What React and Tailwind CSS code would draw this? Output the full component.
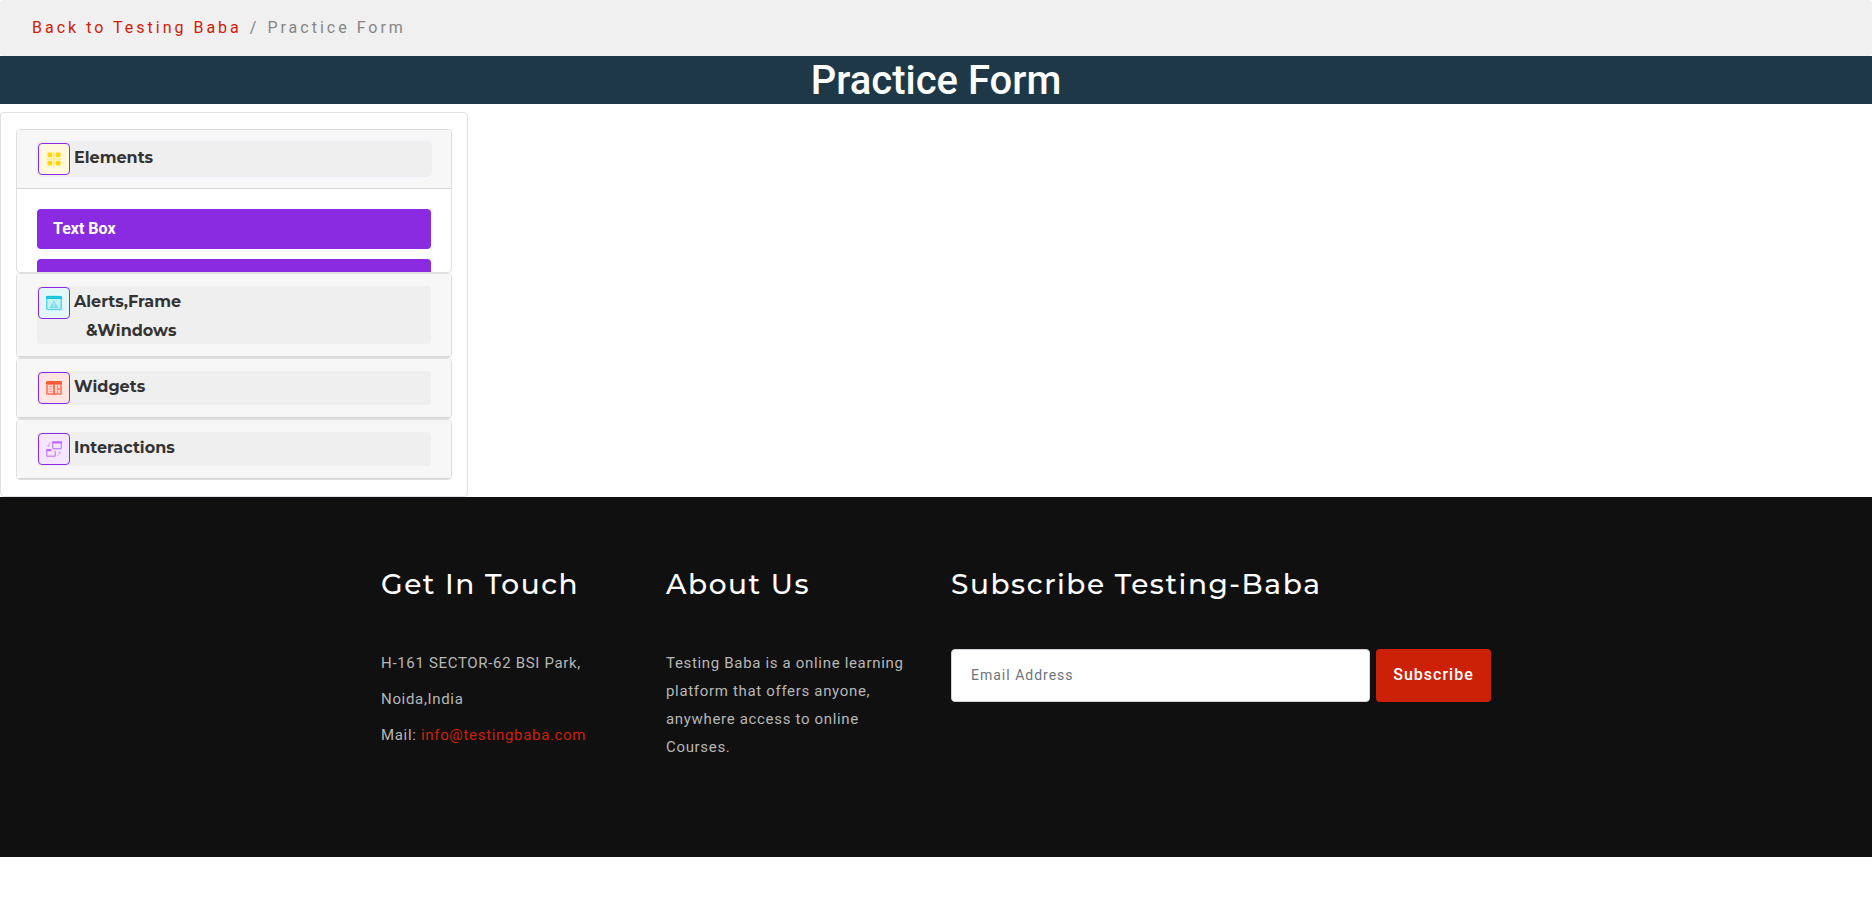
const iconBox = 'mb-px flex size-8 shrink-0 items-center justify-center rounded border border-[#8a2be2]';

function ElementsIcon() {
  return (
    <span className={`${iconBox} bg-[#fff8dc]`}>
      <svg width="16" height="16" viewBox="0 0 16 16" fill="#ffd60a" aria-hidden="true">
        <path d="M7.2 1h1.6v14H7.2zM.5 7.2h15v1.6H.5z" opacity=".35" />
        <rect x="1.5" y="1.5" width="4.8" height="4.8" rx="1" />
        <rect x="9.7" y="1.5" width="4.8" height="4.8" rx="1" />
        <rect x="1.5" y="9.7" width="4.8" height="4.8" rx="1" />
        <rect x="9.7" y="9.7" width="4.8" height="4.8" rx="1" />
      </svg>
    </span>
  );
}

function AlertsIcon() {
  return (
    <span className={`${iconBox} bg-[#e3f7fb]`}>
      <svg width="16" height="16" viewBox="0 0 16 16" aria-hidden="true">
        <rect x=".75" y="1.5" width="14.5" height="13" rx="1" fill="#c4f0f7" stroke="#5fd6e6" strokeWidth="1.5" />
        <path d="M0 4V2a1 1 0 0 1 1-1h14a1 1 0 0 1 1 1v2z" fill="#1fc5dc" />
        <path d="M8 5.5 12.5 13h-9z" fill="#7bdcea" />
        <path d="M7.5 8h1v2.5h-1zM7.5 11.2h1v1h-1z" fill="#e3f7fb" />
      </svg>
    </span>
  );
}

function WidgetsIcon() {
  return (
    <span className={`${iconBox} bg-[#ffe5e0]`}>
      <svg width="16" height="16" viewBox="0 0 16 16" aria-hidden="true">
        <rect x="0" y="1" width="16" height="14" rx="1.5" fill="#ff8a72" />
        <path d="M0 4V2.5A1.5 1.5 0 0 1 1.5 1h13A1.5 1.5 0 0 1 16 2.5V4z" fill="#ff5a36" />
        <path d="M2 5h5v8H2zM9 5h2v8H9zM12 5h2v3h-2zM12 10h2v3h-2z" fill="#ffd5cc" />
        <path d="M3 6.5h3M3 9h3M3 11.5h3" stroke="#ff9a84" />
        <path d="M8 4v11" stroke="#ff6f50" strokeWidth="1.5" />
      </svg>
    </span>
  );
}

function InteractionsIcon() {
  return (
    <span className={`${iconBox} bg-[#f4e6fe]`}>
      <svg width="16" height="16" viewBox="0 0 16 16" fill="none" stroke="#cd8cfb" aria-hidden="true">
        <rect x="6.7" y="1" width="8.6" height="6.8" rx=".7" strokeWidth="1.4" />
        <path d="M6 1.5h10" stroke="#bf68f8" strokeWidth="2" />
        <path d="M5 8.7H1.4a.7.7 0 0 0-.7.7v5.2c0 .4.3.7.7.7h7.2c.4 0 .7-.3.7-.7V10" strokeWidth="1.4" />
        <path d="M.5 9.2H5.5" stroke="#bf68f8" strokeWidth="2" />
        <path d="M4.5 1.8C2.7 2 2.3 3 2.3 5.5M.9 4.2l1.4 1.5 1.4-1.500M11.5 14.500c1.800-.2 2.200-1.200 2.200-3.700M12.300 12.200l1.400-1.500 1.400 1.500" opacity=".65" />
      </svg>
    </span>
  );
}

function AccordionCard({ icon, label, secondLine, open = false, children }) {
  return (
    <section className="overflow-hidden rounded border border-[#dfdfdf] bg-white">
      <h2 className="border-b border-[#d5d5d5] bg-[#f7f7f7] px-5 py-3">
        <button
          type="button"
          aria-expanded={open}
          className={`flex w-full items-start gap-1 rounded bg-[#efefef] px-px pt-px text-left font-[Montserrat,sans-serif] text-base leading-[29px] font-bold text-[#333] ${open ? 'ring-1 ring-[#edf0f6]' : ''}`}
        >
          {icon}
          <span className="-mb-px">
            {label}
            {secondLine && <span className="block pl-3">{secondLine}</span>}
          </span>
        </button>
      </h2>
      {children}
    </section>
  );
}

function FooterHeading({ children }) {
  return (
    <h3 className="mb-11 font-[Montserrat,sans-serif] text-[28px] leading-[34px] font-medium tracking-[0.055em] text-white">
      {children}
    </h3>
  );
}

export default function App() {
  return (
    <div className="min-h-screen bg-white font-[Roboto,sans-serif] text-[#b7b7b7]">
      <nav aria-label="Breadcrumb" className="flex gap-2 rounded bg-[#f0f0f0] px-8 py-4 text-base tracking-[3px] text-[#868686]">
        <a href="#home" className="text-[#cc2106]">Back to Testing Baba</a>
        <span>/</span>
        <span>Practice Form</span>
      </nav>
      <h1 className="bg-[#1e3847] pt-0.5 text-center text-[40px] leading-[46px] font-medium text-white">Practice Form</h1>

      <main className="pt-2">
        <div className="w-1/4 rounded border border-[#dee2e6] bg-white px-[15px] py-4">
          <AccordionCard icon={<ElementsIcon />} label="Elements" open>
            <div className="h-[83px] overflow-hidden px-5 pt-5">
              <a href="#text-box" className="mb-2.5 block rounded bg-[#8a2be2] px-4 py-2 text-base leading-6 font-bold text-white">
                Text Box
              </a>
              <div className="h-10 rounded bg-[#8a2be2]" />
            </div>
          </AccordionCard>
          <AccordionCard icon={<AlertsIcon />} label="Alerts,Frame" secondLine="&Windows" />
          <AccordionCard icon={<WidgetsIcon />} label="Widgets" />
          <AccordionCard icon={<InteractionsIcon />} label="Interactions" />
        </div>
      </main>

      <footer className="bg-[#101010] pt-[70px] pb-24">
        <div className="mx-auto grid max-w-[1140px] grid-cols-4 text-[15px] tracking-[0.045em]">
          <section className="px-[15px]">
            <FooterHeading>Get In Touch</FooterHeading>
            <address className="leading-9 whitespace-nowrap not-italic">
              H-161 SECTOR-62 BSI Park,<br />
              Noida,India<br />
              Mail: <a href="mailto:info@testingbaba.com" className="text-[#cc2106]">info@testingbaba.com</a>
            </address>
          </section>
          <section className="px-[15px]">
            <FooterHeading>About Us</FooterHeading>
            <p className="pt-1 leading-7">
              Testing Baba is a online learning platform that offers anyone, anywhere access to online Courses.
            </p>
          </section>
          <section className="col-span-2 px-[15px]">
            <FooterHeading>Subscribe Testing-Baba</FooterHeading>
            <form className="flex gap-1.5 pt-1" onSubmit={(e) => e.preventDefault()}>
              <input
                type="email"
                aria-label="Email Address"
                placeholder="Email Address"
                className="h-[53px] min-w-0 flex-1 rounded border border-[#ced4da] bg-white px-[19px] pb-0.5 text-sm tracking-[1px] text-[#495057] placeholder:text-[#6c757d]"
              />
              <button type="submit" className="h-[53px] w-[115px] rounded bg-[#cc2106] pb-0.5 text-base font-medium tracking-[1px] text-white">
                Subscribe
              </button>
            </form>
          </section>
        </div>
      </footer>
    </div>
  );
}
